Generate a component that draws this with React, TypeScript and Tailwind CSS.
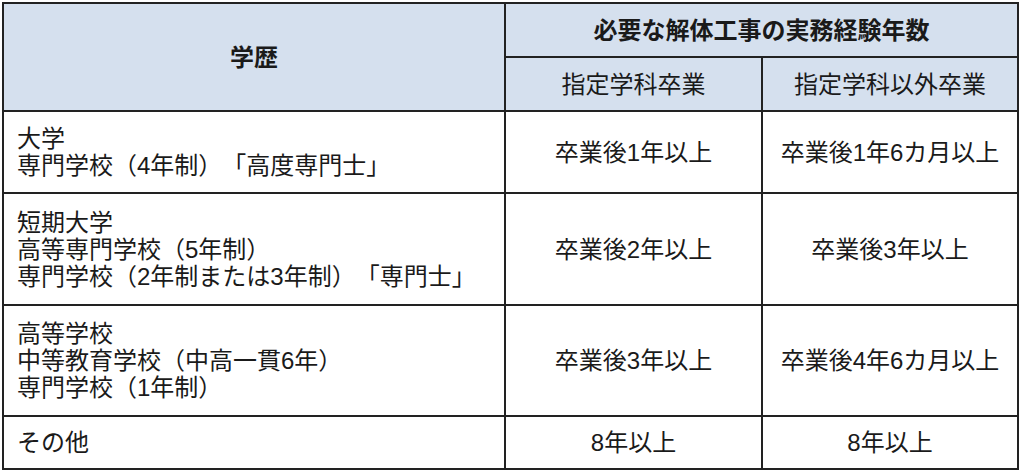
const ROWS = [
    { label: ['大学', '専門学校（4年制）「高度専門士」'], a: '卒業後1年以上', b: '卒業後1年6カ月以上', h: 'h-[82px]' },
    { label: ['短期大学', '高等専門学校（5年制）', '専門学校（2年制または3年制）「専門士」'], a: '卒業後2年以上', b: '卒業後3年以上', h: 'h-[112px]' },
    { label: ['高等学校', '中等教育学校（中高一貫6年）', '専門学校（1年制）'], a: '卒業後3年以上', b: '卒業後4年6カ月以上', h: 'h-[111px]' },
    { label: ['その他'], a: '8年以上', b: '8年以上', h: 'h-[53px]' },
]

export default function App() {
    return (
        <div className="w-[1024px] h-[473px] bg-white pl-[2px] pt-[2px] font-['Liberation_Sans','Noto_Sans_CJK_JP',sans-serif] text-[24px] leading-[27px] text-[#1a1a1a] [text-spacing-trim:space-all]">
            <table className="table-fixed border-collapse w-[1017px]">
                <colgroup>
                    <col className="w-[502px]" />
                    <col className="w-[257px]" />
                    <col className="w-[256px]" />
                </colgroup>
                <thead>
                    <tr className="h-[54px] bg-[#d5e0ee]">
                        <th rowSpan={2} className="border-2 border-[#222] font-bold text-center align-middle">学歴</th>
                        <th colSpan={2} className="border-2 border-[#222] font-bold text-center align-middle">必要な解体工事の実務経験年数</th>
                    </tr>
                    <tr className="h-[54px] bg-[#d5e0ee]">
                        <th className="border-2 border-[#222] font-normal text-center align-middle">指定学科卒業</th>
                        <th className="border-2 border-[#222] font-normal text-center align-middle">指定学科以外卒業</th>
                    </tr>
                </thead>
                <tbody>
                    {ROWS.map((r, i) => (
                        <tr key={i} className={r.h}>
                            <td className="border-2 border-[#222] pl-[13px] align-middle whitespace-nowrap">
                                {r.label.map((l, j) => <div key={j}>{l}</div>)}
                            </td>
                            <td className="border-2 border-[#222] text-center align-middle whitespace-nowrap">{r.a}</td>
                            <td className="border-2 border-[#222] text-center align-middle whitespace-nowrap">{r.b}</td>
                        </tr>
                    ))}
                </tbody>
            </table>
        </div>
    )
}
